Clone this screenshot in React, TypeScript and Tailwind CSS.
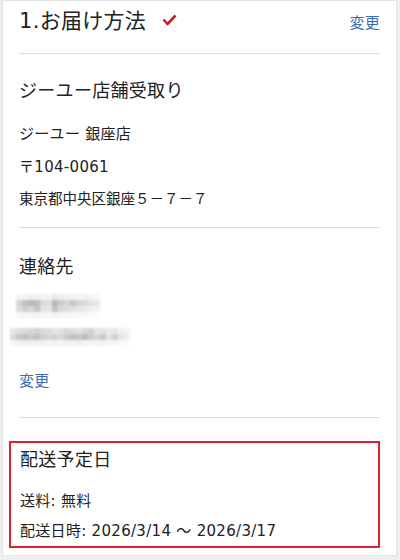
import React from 'react'

const font = { fontFamily: '"DejaVu Sans", "Noto Sans CJK JP", "Noto Sans", sans-serif' }

// mosaic cells for the masked contact info
const mosaic1 = [
  [0.05, 0.06, 0.08, 0.07, 0.05, 0.06, 0.1, 0.08, 0.07, 0.06, 0.05, 0.06, 0.05, 0.04],
  [0.2, 0.3, 0.34, 0.32, 0.18, 0.16, 0.34, 0.25, 0.2, 0.28, 0.2, 0.18, 0.14, 0.12],
  [0.16, 0.24, 0.2, 0.28, 0.14, 0.12, 0.3, 0.18, 0.16, 0.14, 0.12, 0.1, 0.08, 0.06],
  [0.04, 0.05, 0.05, 0.06, 0.04, 0.04, 0.06, 0.05, 0.04, 0.04, 0.03, 0.03, 0.02, 0.02],
]
const mosaic2 = [
  [0.12, 0.16, 0.18, 0.2, 0.22, 0.18, 0.16, 0.12, 0.14, 0.18, 0.16, 0.14, 0.2, 0.22, 0.12, 0.14, 0.1, 0.12, 0.08, 0.06],
  [0.18, 0.28, 0.3, 0.26, 0.3, 0.24, 0.2, 0.22, 0.18, 0.26, 0.3, 0.28, 0.32, 0.24, 0.2, 0.26, 0.14, 0.22, 0.12, 0.08],
  [0.05, 0.06, 0.08, 0.07, 0.06, 0.07, 0.05, 0.06, 0.05, 0.07, 0.06, 0.08, 0.06, 0.05, 0.05, 0.06, 0.04, 0.05, 0.03, 0.02],
]

function Mosaic({ cells }: { cells: number[][] }) {
  return (
    <div className="flex flex-col blur-[0.8px]">
      {cells.map((row, r) => (
        <div key={r} className="flex">
          {row.map((v, c) => (
            <div key={c} className="w-[6px] h-[6px]" style={{ backgroundColor: `rgba(50,50,50,${v})` }} />
          ))}
        </div>
      ))}
    </div>
  )
}

function Divider() {
  return <div className="h-px bg-[#dcdcdc]" />
}

export default function App() {
  return (
    <div className="w-[400px] h-[560px] bg-[#efefef] pl-[2px] pr-[3px] pb-[4px] overflow-hidden" style={font}>
      <div className="h-full bg-white border border-[#e2e2e2] px-[16px] text-[#222] tracking-[0.3px]">
        {/* Header */}
        <div className="flex items-center h-[40px]">
          <span className="text-[21px] leading-[40px]">1.お届け方法</span>
          <svg className="ml-[16px] mt-[-2px]" width="15" height="12" viewBox="0 0 15 12">
            <path d="M1.5 5.5 L5.5 10 L13.5 1.5" fill="none" stroke="#c8202a" strokeWidth="2.6" strokeLinejoin="round" />
          </svg>
          <span className="ml-auto mt-[4px] text-[15px] text-[#3b6cb3]">変更</span>
        </div>
        <div className="mt-[12px]">
          <Divider />
        </div>

        {/* Store pickup */}
        <div className="mt-[23px] text-[18px] leading-[28px]">ジーユー店舗受取り</div>
        <div className="mt-[17px] text-[15px] leading-[24px]">ジーユー 銀座店</div>
        <div className="mt-[9px] text-[15px] leading-[24px]">〒104-0061</div>
        <div className="mt-[8px] text-[14.5px] leading-[24px] tracking-normal">東京都中央区銀座５－７－７</div>
        <div className="mt-[16px]">
          <Divider />
        </div>

        {/* Contact */}
        <div className="mt-[25px] text-[18px] leading-[28px]">連絡先</div>
        <div className="mt-[13px] ml-[-3px]">
          <Mosaic cells={mosaic1} />
        </div>
        <div className="mt-[10px] ml-[-9px]">
          <Mosaic cells={mosaic2} />
        </div>
        <div className="mt-[23px] text-[15px] leading-[24px] text-[#3b6cb3]">変更</div>
        <div className="mt-[24px]">
          <Divider />
        </div>

        {/* Delivery date */}
        <div className="mt-[23px] ml-[-10px] border-2 border-[#d9232e] h-[107px] pl-[9px] pt-[3px]">
          <div className="text-[18px] leading-[28px]">配送予定日</div>
          <div className="mt-[15px] text-[15px] leading-[24px]">送料: 無料</div>
          <div className="mt-[6px] text-[15px] leading-[24px]">配送日時: 2026/3/14 ～ 2026/3/17</div>
        </div>
      </div>
    </div>
  )
}
